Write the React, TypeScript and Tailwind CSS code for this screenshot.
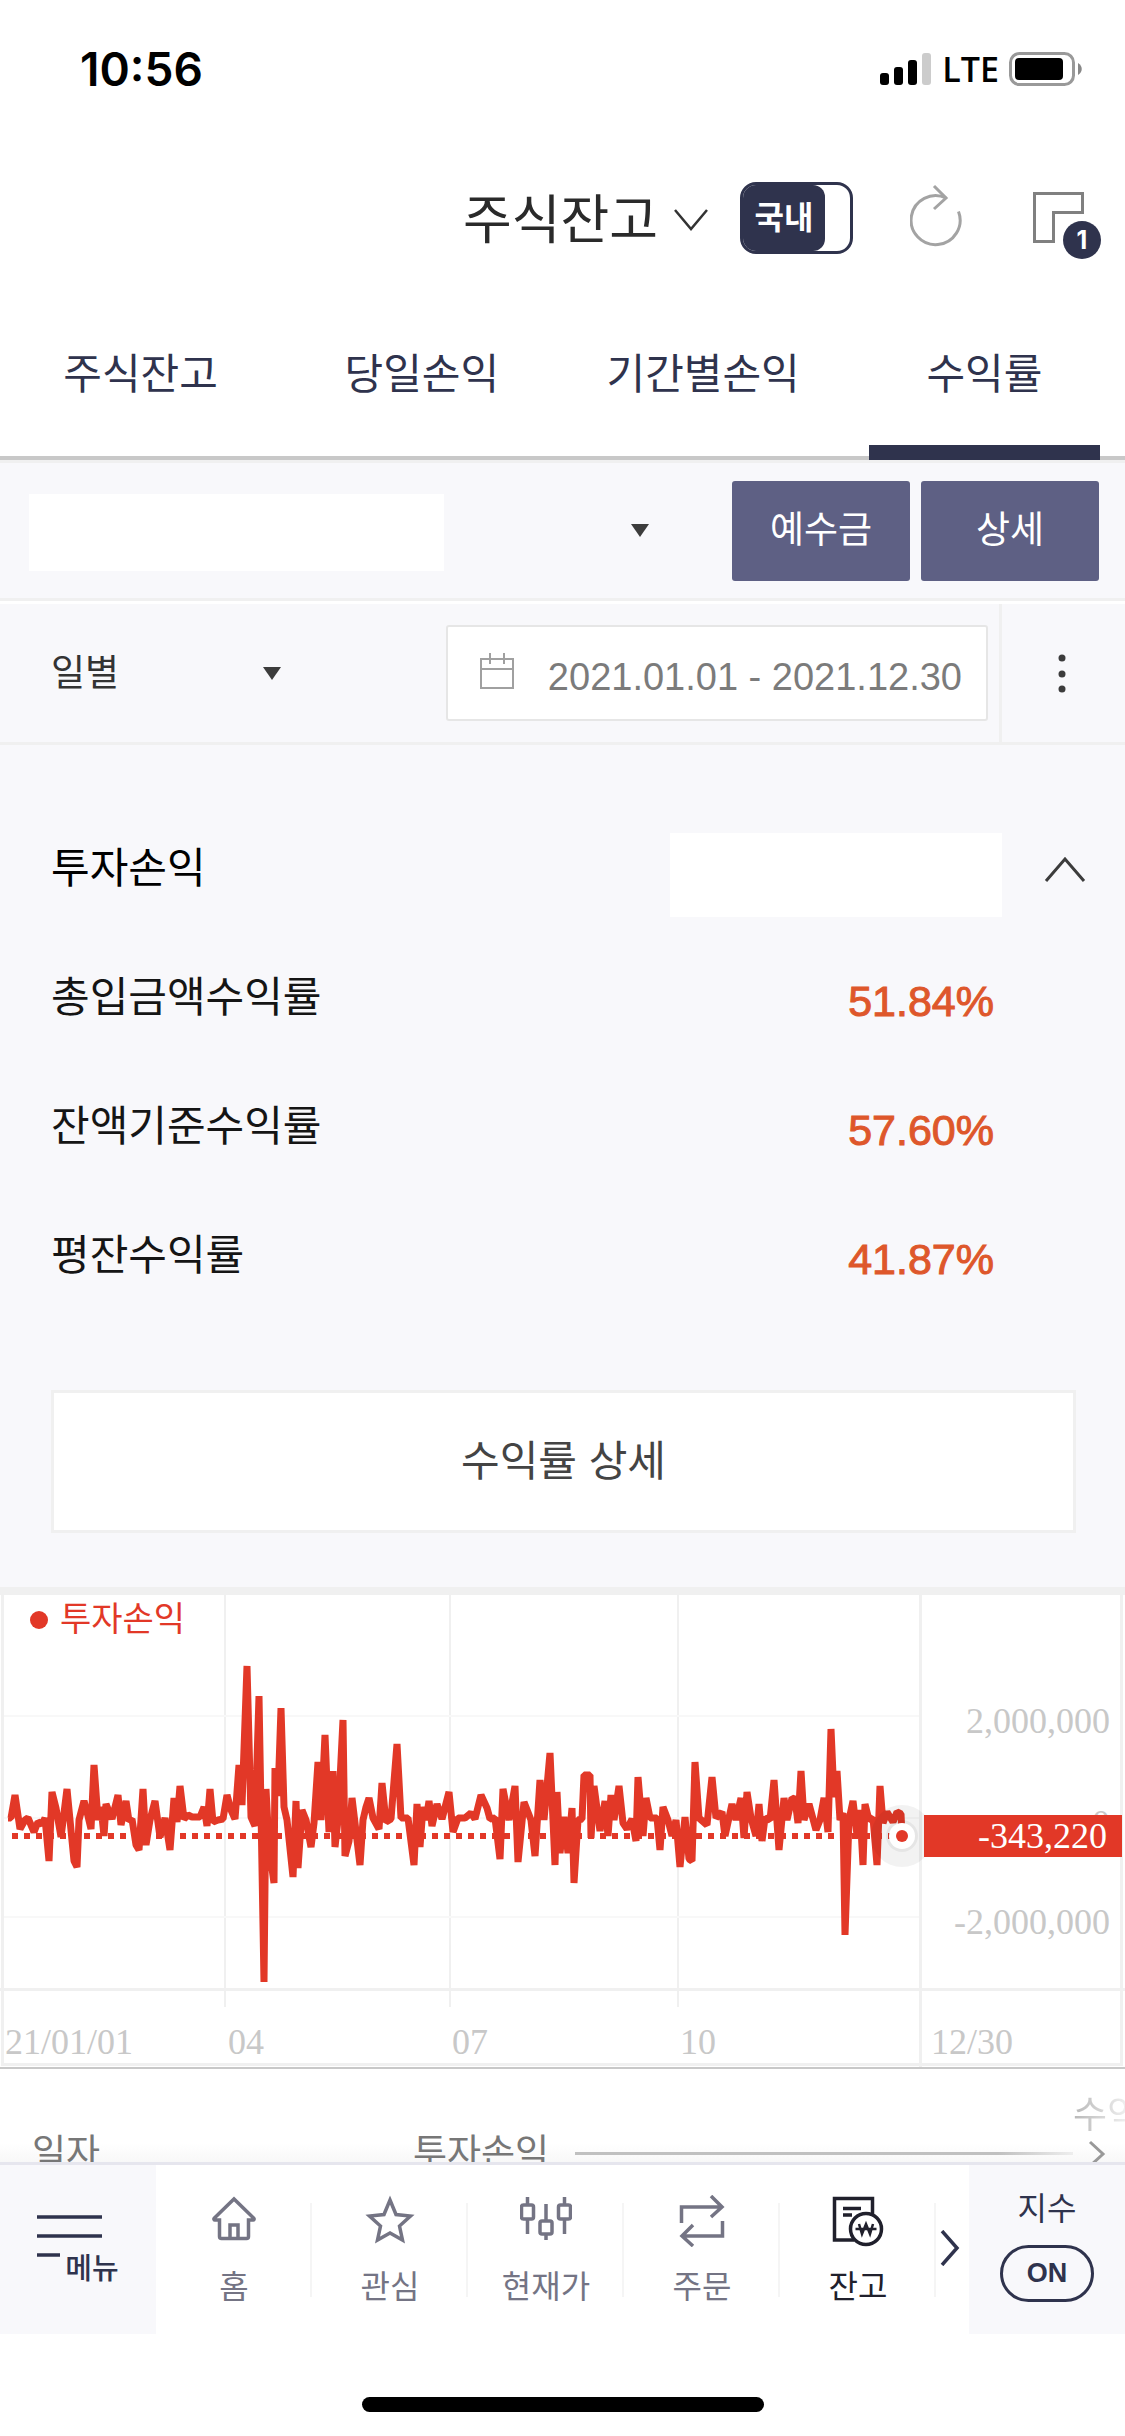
const kr = "font-['Liberation_Sans','Noto_Sans_CJK_KR',sans-serif]"

const tabs = ['주식잔고', '당일손익', '기간별손익', '수익률']

const rates = [
  { label: '총입금액수익률', value: '51.84%' },
  { label: '잔액기준수익률', value: '57.60%' },
  { label: '평잔수익률', value: '41.87%' },
]

// daily profit line, x y pairs in chart units (zero is at 223)
const profitLine =
  '8,223 11,223 15,200 20,234 25,225 28,223 34,237 38,227 42,229 45,223 49,266 52,197 56,213 61,242 67,194 74,266 77,272 79,225 84,206 87,217 91,234 94,170 98,225 101,212 104,241 106,209 112,224 118,200 121,230 126,206 129,226 132,224 136,250 139,255 143,194 146,250 150,225 155,206 160,242 165,223 170,255 174,203 177,227 180,191 184,224 188,220 192,222 200,222 204,212 207,231 210,194 213,227 218,225 223,224 227,200 231,215 235,224 239,170 242,210 247,71 251,222 255,231 259,101 264,387 266,194 269,252 274,288 275,173 278,201 281,113 284,212 287,225 293,282 296,206 298,273 302,215 306,225 311,252 314,228 318,167 321,225 325,140 329,237 333,176 335,252 338,225 343,125 345,261 349,246 352,203 360,270 363,225 366,212 369,203 373,223 379,234 382,188 386,227 391,224 397,149 401,223 408,223 414,270 417,209 420,252 423,212 426,225 429,206 432,231 437,209 442,224 449,197 453,237 458,223 465,223 471,218 475,224 481,200 487,213 490,224 495,223 500,264 503,194 509,225 515,191 518,267 524,207 531,225 535,261 540,185 544,225 550,158 555,270 557,197 560,258 564,222 568,258 572,213 574,288 578,225 582,224 584,180 590,180 591,243 594,191 600,236 605,206 608,241 611,200 614,225 619,191 623,228 627,234 632,224 636,246 638,182 643,241 646,203 650,223 657,223 660,255 663,212 668,225 672,241 676,225 680,272 685,222 689,264 692,266 695,167 699,223 707,230 712,182 716,223 722,217 725,241 732,209 736,225 741,203 744,243 747,197 751,223 756,241 759,209 762,246 765,223 770,225 774,185 779,255 784,203 787,225 792,203 795,204 798,228 801,176 804,225 809,209 816,235 820,225 824,203 828,237 831,134 834,202 837,176 840,225 843,218 845,340 849,225 853,206 857,240 860,215 863,270 865,209 869,225 873,223 877,270 880,191 883,228 887,217 893,227 897,217 901,219 902,241'

function Caret() {
  return (
    <svg width="18" height="13" viewBox="0 0 18 13" className="shrink-0">
      <path d="M0 0h18l-9 13z" fill="#3c3c3c" />
    </svg>
  )
}

function StatusBar() {
  return (
    <div className="flex h-[138px] items-center justify-between pl-20 pr-[43px] font-[Inter,sans-serif] text-black">
      <span className="text-[46px] font-semibold leading-none">10:56</span>
      <div className="flex items-center gap-[10px]">
        <svg width="52" height="34" viewBox="0 0 52 34">
          <rect x="0" y="21" width="9" height="12" rx="3" />
          <rect x="14" y="15" width="9" height="18" rx="3" />
          <rect x="28" y="8" width="9" height="25" rx="3" />
          <rect x="42" y="1" width="9" height="32" rx="3" fill="#ccc" />
        </svg>
        <span className="font-['Open_Sans',sans-serif] text-[34px] font-semibold leading-none">LTE</span>
        <svg width="73" height="34" viewBox="0 0 73 34">
          <rect x="1.5" y="1.5" width="63" height="31" rx="9" fill="none" stroke="#999" strokeWidth="3" />
          <rect x="6" y="6" width="48" height="22" rx="4" />
          <path d="M69 11c5 3 5 9 0 12z" fill="#888" />
        </svg>
      </div>
    </div>
  )
}

function Header() {
  return (
    <header className="flex h-40 items-center justify-end pr-6">
      <button className="flex items-center gap-4 pt-1 text-[53px] leading-none text-[#2a2a2a]">
        <h1>주식잔고</h1>
        <svg width="34" height="22" viewBox="0 0 34 22" fill="none" stroke="#333" strokeWidth="2.5">
          <path d="M1 1l16 19L33 1" />
        </svg>
      </button>
      <button
        role="switch"
        aria-checked="true"
        className="ml-8 flex h-[72px] w-[113px] items-stretch overflow-hidden rounded-2xl border-[3px] border-[#2f334d] bg-white"
      >
        <span className="flex w-[82px] items-center justify-center rounded-r-xl bg-[#2f334d] text-[32px] font-bold leading-none text-white">
          국내
        </span>
      </button>
      <button aria-label="새로고침" className="ml-[57px] pb-1">
        <svg width="53" height="64" viewBox="0 0 53 64" fill="none" stroke="#a3a3a3" strokeWidth="3">
          <path d="M48.500 27.500A24.500 24.500 0 1 1 36 14" />
          <path d="M24 2l12 12-12 11" />
        </svg>
      </button>
      <button aria-label="화면 1" className="relative ml-[70px] h-[82px] w-[68px]">
        <svg width="68" height="82" viewBox="0 0 68 82" fill="none" stroke="#808080" strokeWidth="3">
          <path d="M1.500 16.500h48v19h-29v29h-19z" />
        </svg>
        <span className="absolute bottom-0 right-0 flex size-[38px] items-center justify-center rounded-full bg-[#2f334d] font-[Inter,sans-serif] text-[25px] font-bold leading-none text-white">
          1
        </span>
      </button>
    </header>
  )
}

function Tabs() {
  return (
    <nav className="grid grid-cols-4 border-b-4 border-[#c8c8c8]">
      {tabs.map((tab, i) => (
        <a
          key={tab}
          href="#"
          className="relative flex h-[158px] items-center justify-center pb-1 text-[42px] leading-none text-[#2f334d]"
        >
          {tab}
          {i === 3 && <span className="absolute inset-x-[25px] -bottom-1 h-[15px] bg-[#2f334d]" />}
        </a>
      ))}
    </nav>
  )
}

function Filters() {
  return (
    <>
      <div className="flex h-[141px] items-center border-y-[3px] border-[#f0f0f0] pl-[29px] pr-[26px]">
        <div className="flex flex-1 items-center justify-between pr-[83px]">
          <select aria-label="계좌" className="mt-1 h-[77px] w-[415px] appearance-none bg-white">
            <option></option>
          </select>
          <Caret />
        </div>
        <div className="flex gap-[11px] text-[37px] leading-none text-white">
          <button className="h-[100px] w-[178px] rounded-[3px] bg-[#5e6084]">예수금</button>
          <button className="h-[100px] w-[178px] rounded-[3px] bg-[#5e6084]">상세</button>
        </div>
      </div>
      <div className="flex h-36 items-center border-b-[3px] border-t-[3px] border-b-[#f0f0f0] border-t-white pl-[51px]">
        <div className="flex items-center">
          <select aria-label="조회 단위" className="w-[212px] appearance-none text-[37px] leading-none text-[#333]">
            <option>일별</option>
          </select>
          <Caret />
        </div>
        <button className="ml-auto flex h-24 items-center gap-[34px] rounded-[3px] border-2 border-[#e6e6e6] bg-white pl-8 pr-6 text-[38px] leading-none text-[#7b7b7b]">
          <svg width="34" height="40" viewBox="0 0 34 40" fill="none" stroke="#a0a0a0" strokeWidth="2">
            <path d="M1 6h32v29H1zM1 16h32M10 0v11M24 0v11" />
          </svg>
          <span className="pt-2">2021.01.01 - 2021.12.30</span>
        </button>
        <button
          aria-label="더보기"
          className="ml-[11px] flex w-[126px] items-center justify-center self-stretch border-l-[3px] border-[#f0f0f0] pr-1"
        >
          <svg width="8" height="40" viewBox="0 0 8 40" fill="#3c3c3c">
            <circle cx="4" cy="5" r="3.500" />
            <circle cx="4" cy="21" r="3.500" />
            <circle cx="4" cy="36" r="3.500" />
          </svg>
        </button>
      </div>
    </>
  )
}

function Summary() {
  return (
    <section className="pb-[54px] pl-[51px] pr-[49px] pt-[59px] text-[42px] leading-none">
      <dl>
        <div className="flex h-[129px] items-center">
          <dt className="text-black">투자손익</dt>
          <dd className="ml-auto mt-3 h-[84px] w-[332px] bg-white" />
          <button aria-label="접기" className="-mr-[10px] ml-[42px]">
            <svg width="42" height="26" viewBox="0 0 42 26" fill="none" stroke="#3c3c3c" strokeWidth="3">
              <path d="M2 25L21 3l19 22" />
            </svg>
          </button>
        </div>
        {rates.map((rate) => (
          <div key={rate.label} className="flex h-[129px] items-center justify-between pr-[82px]">
            <dt className="text-[#151515]">{rate.label}</dt>
            <dd className="pt-2 text-[43px] text-[#de572b] [-webkit-text-stroke:1px_#de572b]">{rate.value}</dd>
          </div>
        ))}
      </dl>
      <button className="mt-[70px] h-[143px] w-full border-[3px] border-[#f0f0f0] bg-white text-[#444]">
        수익률 상세
      </button>
    </section>
  )
}

function ProfitChart() {
  return (
    <section className="border-b-2 border-t-8 border-b-[#c8c8c8] border-t-[#f0f0f0] bg-white">
      <svg viewBox="0 0 1125 472" className="block w-full">
        <g fill="none" stroke="#f0f0f0">
          <path d="M225 0v412M450 0v412M678 0v412" strokeWidth="2" />
          <path d="M4 121h916M4 223h916M4 322h916" stroke="#f8f8f8" strokeWidth="2" />
          <path d="M2.500 0v469.500h1119V0M0 394.500h1125M920.500 0v472" strokeWidth="3" />
        </g>
        <circle cx="39" cy="25" r="9" fill="#e23827" />
        <text x="60" y="36" fontSize="34" fill="#e23827">
          투자손익
        </text>

        <path d="M12 241h890" stroke="#e23827" strokeWidth="6" strokeDasharray="6 6" />
        <polyline points={profitLine} fill="none" stroke="#e23827" strokeWidth="7" strokeLinejoin="bevel" />
        <circle cx="902" cy="241" r="31" fill="#000" fillOpacity="0.05" />
        <circle cx="902" cy="241" r="16" fill="#000" fillOpacity="0.05" />
        <circle cx="902" cy="241" r="13" fill="#fff" />
        <circle cx="902" cy="241" r="6" fill="#e23827" />

        <g className="font-['Liberation_Serif',serif]" fontSize="36" fill="#c8c8c8">
          <g textAnchor="end">
            <text x="1110" y="138">2,000,000</text>
            <text x="1110" y="240">0</text>
            <text x="1110" y="339">-2,000,000</text>
            <path d="M924 220h198v42H924z" fill="#e23827" />
            <text x="1107" y="253" fill="#fff">-343,220</text>
          </g>
          <text x="5" y="459">21/01/01</text>
          <text x="228" y="459">04</text>
          <text x="452" y="459">07</text>
          <text x="680" y="459">10</text>
          <text x="931" y="459">12/30</text>
        </g>
      </svg>
    </section>
  )
}

function DailyTable() {
  return (
    <section className="relative h-[93px] overflow-hidden bg-linear-to-b from-white from-80% to-[#f8f8f8]">
      <table className="h-[168px] w-full table-fixed text-left text-[37px] leading-none text-[#777]">
        <thead>
          <tr>
            <th className="w-[413px] pl-8 font-normal">일자</th>
            <th className="font-normal">
              <div className="flex items-center gap-[26px]">
                투자손익
                <span className="h-[3px] flex-1 bg-linear-to-r from-[#c0c0c0] from-85% to-[#eee]" />
              </div>
            </th>
            <th className="w-[52px] whitespace-nowrap bg-linear-to-r from-[#b8b8b8] to-[#eee] bg-clip-text pt-7 align-top font-normal text-transparent">
              수익률
            </th>
          </tr>
        </thead>
      </table>
      <svg width="18" height="28" viewBox="0 0 18 28" className="absolute right-[19px] top-[71px]" fill="none" stroke="#999" strokeWidth="3">
        <path d="M2 2l13 12L2 26" />
      </svg>
    </section>
  )
}

const navItems = [
  {
    label: '홈',
    icon: (
      <>
        <path d="M11.500 25H7a1 1 0 0 1-.800-1.700L26 4l19.800 19.300A1 1 0 0 1 45 25h-4.500v16.500a2 2 0 0 1-2 2h-25a2 2 0 0 1-2-2z" />
        <path d="M22 43V30h8v13" />
      </>
    ),
  },
  {
    label: '관심',
    icon: <path d="M26 5l6 14.500 14.500 1.500-11 10 3 14L26 38l-12.500 7 3-14-11-10L20 19.500z" />,
  },
  {
    label: '현재가',
    icon: (
      <>
        <rect x="1.500" y="10" width="12" height="14" rx="2" />
        <rect x="20" y="26" width="12" height="13" rx="2" />
        <rect x="38.500" y="10" width="12" height="14" rx="2" />
        <path d="M7.500 2v8M7.500 24v15M26 9v17M26 39v6M44.500 2v8M44.500 24v15" />
      </>
    ),
  },
  {
    label: '주문',
    icon: <path d="M5.500 28V12H45M35 1l11 11-11 10M46.500 26v15H7M17 30L6 41l11 10" />,
  },
  {
    label: '잔고',
    icon: (
      <>
        <path d="M22 45H2.500V3.500h38V19M11 13.500h18M11 20h9" />
        <circle cx="34" cy="34" r="15.500" />
        <path d="M27 29l3 10 4-10 4 10 3-10M23.500 34h21" strokeWidth="2.500" />
      </>
    ),
  },
]

function BottomNav() {
  return (
    <footer className="bg-white">
      <nav className="flex h-[172px] items-stretch border-t-[3px] border-[#e6e6ee] text-[32px] leading-none text-[#747484]">
        <button className="flex w-[156px] items-center justify-center bg-[#f8f8fb] text-[#2f334d]">
          <span className="relative">
            <svg width="82" height="44" viewBox="0 0 82 44" fill="none" stroke="currentColor" strokeWidth="3.5">
              <path d="M0 2h65M0 21h65M0 40h23" />
            </svg>
            <span className="block -mt-1 pl-7 text-[29px] font-medium">메뉴</span>
          </span>
        </button>
        <div className="grid flex-1 grid-cols-5">
          {navItems.map((item) => (
            <a
              key={item.label}
              href="#"
              className={`flex flex-col items-center gap-6 pt-[30px] ${item.label === '잔고' ? 'text-[#20202c]' : ''}`}
            >
              <span className="relative flex w-full justify-center">
                <svg width="52" height="52" viewBox="0 0 52 52" fill="none" stroke="currentColor" strokeWidth="3.5">
                  {item.icon}
                </svg>
                <span className="absolute right-0 top-2 h-[94px] w-[2px] bg-[#f5f5f5]" />
              </span>
              <span>{item.label}</span>
            </a>
          ))}
        </div>
        <button aria-label="다음 메뉴" className="flex w-[33px] items-center pb-1 pl-1 text-[#2f334d]">
          <svg width="20" height="36" viewBox="0 0 20 36" fill="none" stroke="currentColor" strokeWidth="3.5">
            <path d="M2 1l15 17L2 35" />
          </svg>
        </button>
        <div className="flex w-[156px] flex-col items-center bg-[#f8f8fb] pt-7 text-[#2f334d]">
          <span id="index-label">지수</span>
          <button
            aria-labelledby="index-label"
            className="mt-5 h-[57px] w-[94px] rounded-full border-[3px] border-[#2f334d] text-[27px] font-bold"
          >
            ON
          </button>
        </div>
      </nav>
      <div className="flex h-[102px] items-end justify-center pb-6">
        <div className="h-[15px] w-[402px] rounded-full bg-black" />
      </div>
    </footer>
  )
}

export default function App() {
  return (
    <div className={`w-full overflow-hidden bg-white ${kr}`}>
      <StatusBar />
      <Header />
      <Tabs />
      <main className="bg-[#f8f8fb]">
        <Filters />
        <Summary />
        <ProfitChart />
        <DailyTable />
      </main>
      <BottomNav />
    </div>
  )
}
